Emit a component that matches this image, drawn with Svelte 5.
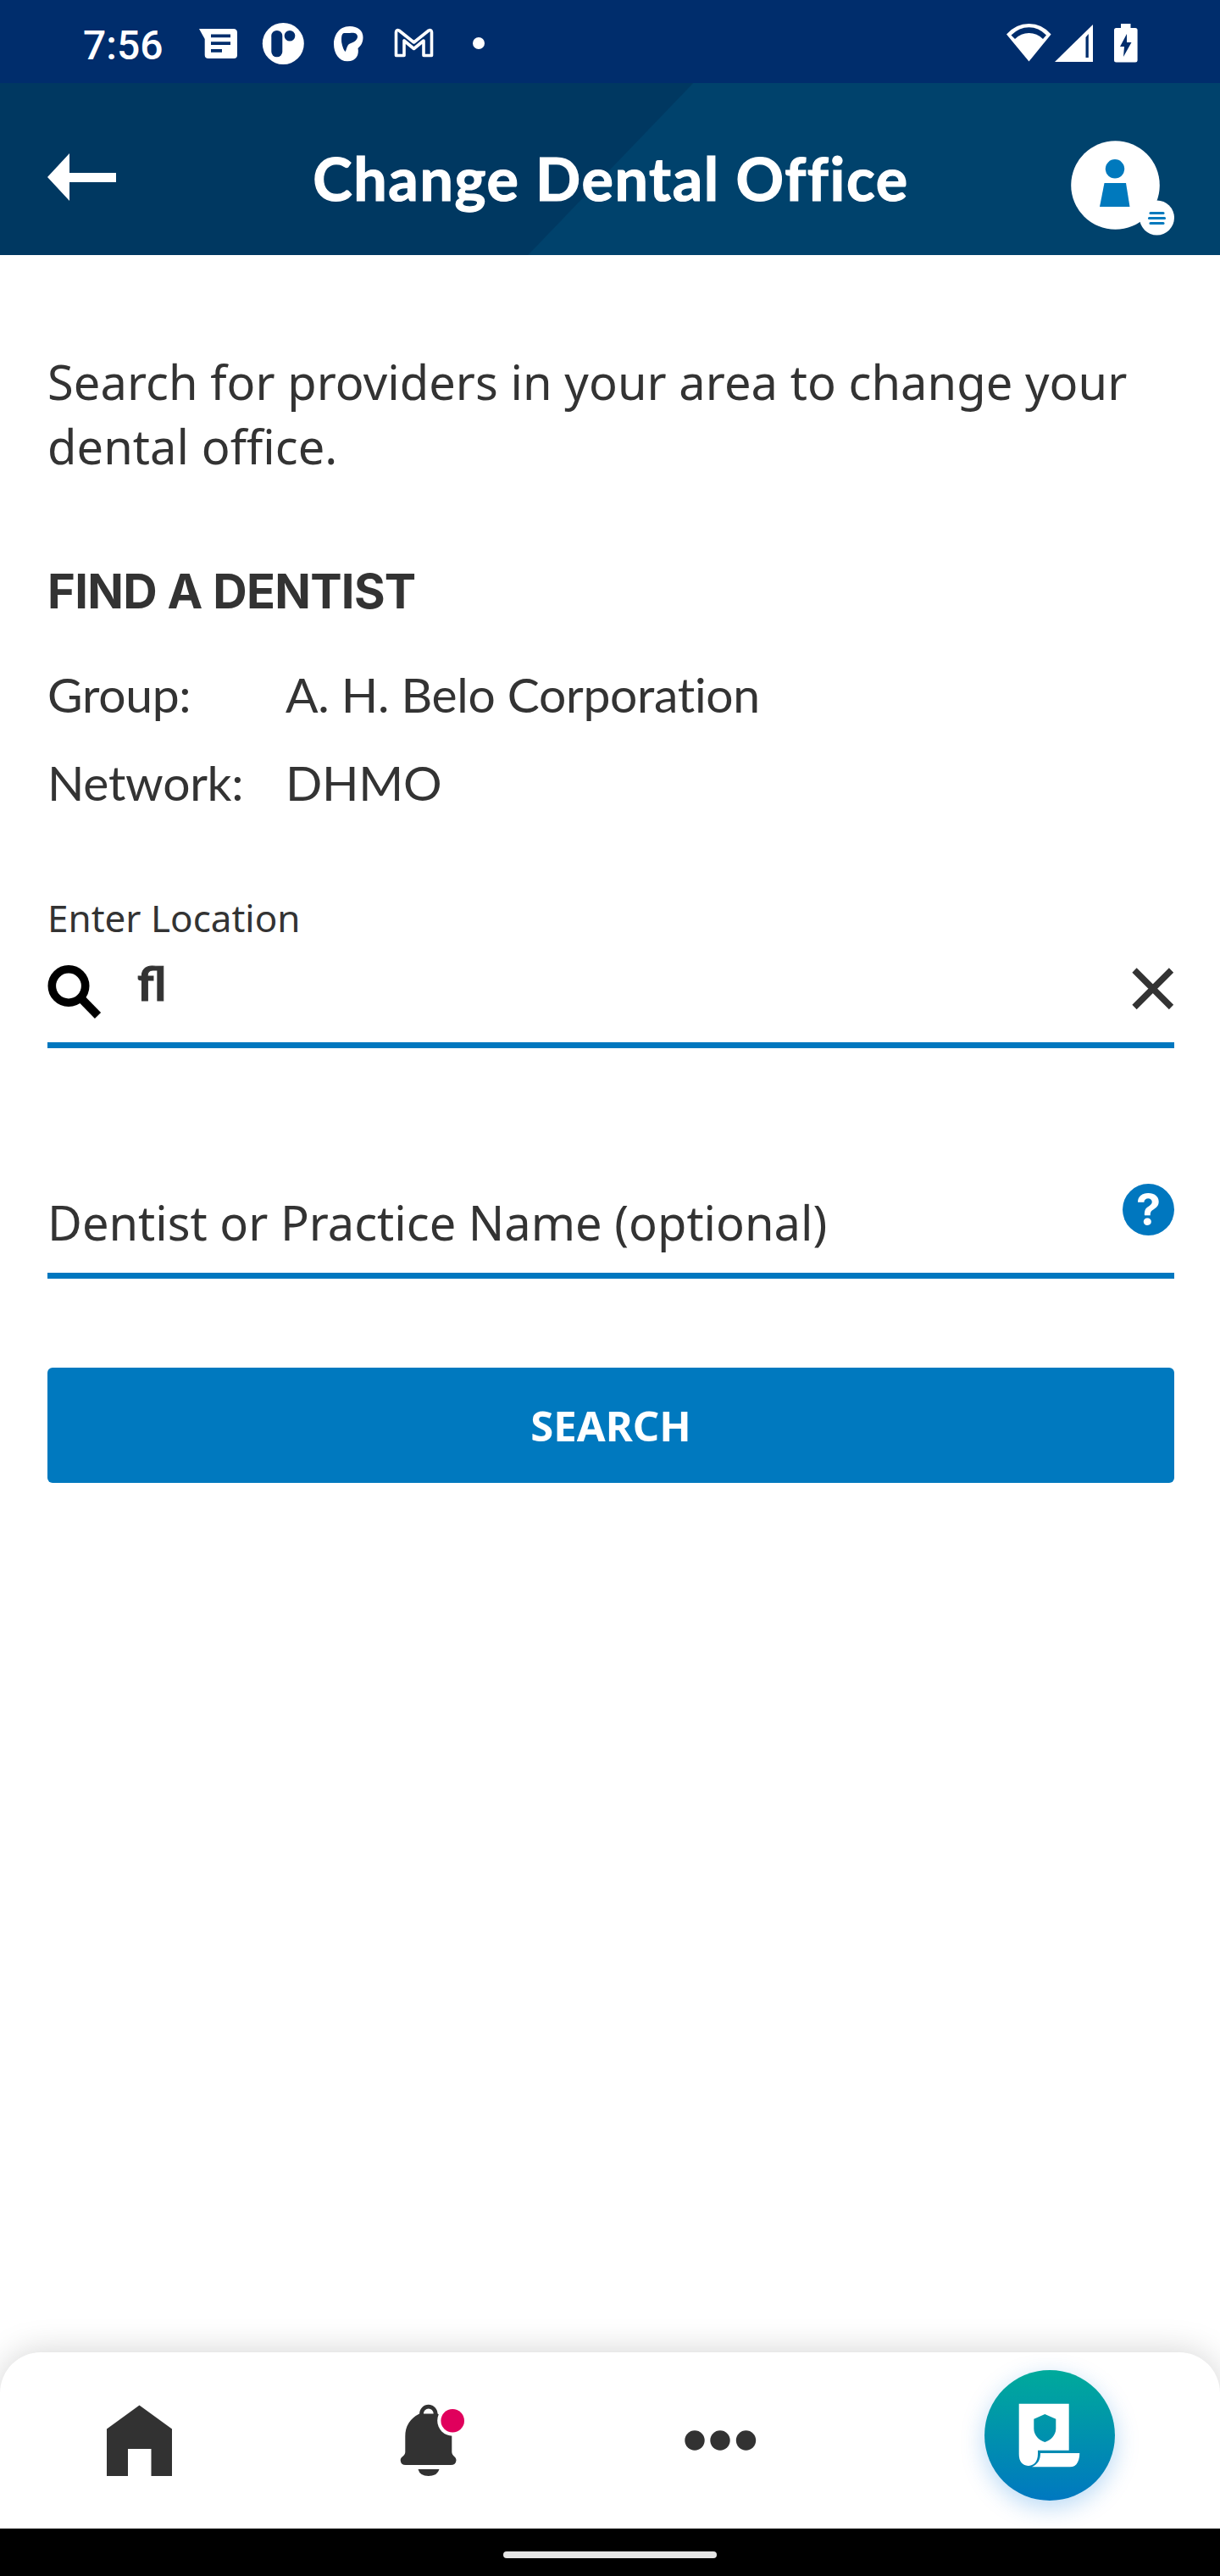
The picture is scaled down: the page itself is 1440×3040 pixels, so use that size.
<script>
  const details = [
    { term: 'Group:', value: 'A. H. Belo Corporation' },
    { term: 'Network:', value: 'DHMO' },
  ];
</script>

<div class="screen">
  <div class="status">
    <span class="clock">7:56</span>
    <div class="notifications">
      <svg width="72" height="98" viewBox="228 0 72 98">
        <path fill="#fff" d="M235 34H275.500Q280 34 280 38.500V65Q280 69 276 69H246Q241.700 69 241.700 65V46Z" />
        <path fill="#002d6c" d="M249 40.500h23v3.700h-23zM249 49.200h23v3.700h-23zM249 58h13v3.700h-13z" />
      </svg>
      <svg width="75" height="98" viewBox="300 0 75 98">
        <circle cx="334.300" cy="51.500" r="24.500" fill="#fff" />
        <rect x="320.300" y="36" width="13" height="31.300" rx="6.300" fill="#002d6c" />
        <circle cx="342" cy="42.300" r="6.300" fill="#002d6c" />
      </svg>
      <svg width="75" height="98" viewBox="375 0 75 98">
        <path fill="#fff" fill-rule="evenodd" d="M413 31C422 31 428.500 36 428.500 44C428.500 50 426 54 422.500 57C424 64 421 72.300 410 72.300C400 72.300 394 63 394 52C394 43 399 31 413 31ZM406 39C402.500 40 403 46 403.200 50C404 54 405.500 59 407.500 61C409 60 409 53 413 51.500C418 50 422 47 422 43C421.500 38 416 38.500 413 39Z" />
      </svg>
      <svg width="75" height="98" viewBox="450 0 75 98">
        <path fill="none" stroke="#fff" stroke-width="3.600" stroke-linejoin="round" d="M467.500 65.500V38Q468 34.500 471 36L488.500 50L506 36Q509 34.500 509.500 38V65.500H500V48L488.500 57.500L477 48V65.500Z" />
      </svg>
      <svg width="60" height="98" viewBox="525 0 60 98"><circle cx="565" cy="51" r="7" fill="#fff" /></svg>
    </div>
    <div class="system">
      <svg width="60" height="98" viewBox="1182 0 60 98">
        <path fill="#fff" d="M1188 40.500Q1199 28 1214.500 28T1240.600 40.500L1214.500 72.500Z" />
        <path fill="#002d6c" d="M1193.500 41.500Q1203 32.300 1214.500 32.300T1235 41.500L1231 46Q1224 39 1214.500 39T1198 46Z" />
      </svg>
      <svg width="63" height="98" viewBox="1242 0 63 98">
        <path fill="#fff" d="M1245 73L1290 29V73Z" />
        <path fill="#002d6c" d="M1281.500 44L1284.800 40V68H1281.500Z" />
      </svg>
      <svg width="45" height="98" viewBox="1305 0 45 98">
        <path fill="#fff" d="M1323 28H1334.500V33H1340Q1342.600 33 1342.600 35.500V71Q1342.600 73.500 1340 73.500H1317.500Q1315 73.500 1315 71V35.500Q1315 33 1317.500 33H1323Z" />
        <path fill="#002d6c" d="M1330 40L1322 55H1327L1326 67L1335.500 50H1330Z" />
      </svg>
    </div>
  </div>

  <header>
    <svg class="back" width="82" height="58" viewBox="56 180 82 58">
      <path fill="#fff" d="M56 209L82 181V204H137V215H82V237Z" />
    </svg>
    <h1>Change Dental Office</h1>
    <svg class="avatar" width="122" height="114" viewBox="1264 165 122 114">
      <circle cx="1316.500" cy="218.500" r="52.300" fill="#fff" />
      <circle cx="1316" cy="199.300" r="11.200" fill="#0079bd" />
      <path fill="#0079bd" d="M1303.500 216H1329L1333.500 244H1298Z" />
      <circle cx="1365.500" cy="257" r="20.500" fill="#fff" />
      <path stroke="#0079bd" stroke-width="3.200" stroke-linecap="round" d="M1358 251.500H1373M1356.500 257.500H1374.500M1358 263.500H1373" />
    </svg>
  </header>

  <main>
    <p class="intro">Search for providers in your area to change your dental office.</p>
    <h2>FIND A DENTIST</h2>
    <dl>
      {#each details as row}
        <div class="row">
          <dt>{row.term}</dt>
          <dd>{row.value}</dd>
        </div>
      {/each}
    </dl>

    <div class="label">Enter Location</div>
    <div class="field location">
      <svg class="loupe" width="64" height="64" viewBox="56 1139 64 64">
        <circle cx="81" cy="1163.500" r="19.700" fill="none" stroke="#000" stroke-width="9.600" />
        <path stroke="#000" stroke-width="10" d="M94.500 1177L115.500 1198.500" />
      </svg>
      <span class="typed">fl</span>
      <svg class="clear" width="50" height="50" viewBox="0 0 50 50">
        <path stroke="#333" stroke-width="7.500" d="M3 3L46.500 46.500M46.500 3L3 46.500" />
      </svg>
    </div>

    <div class="field practice">
      <span class="placeholder">Dentist or Practice Name (optional)</span>
      <span class="help">?</span>
    </div>

    <button>SEARCH</button>
  </main>

  <nav>
    <svg width="330" height="208" viewBox="0 2776 330 208">
      <path fill="#323232" d="M164.500 2838.500L203 2866.500V2922H178.500V2890H151V2922H126V2866.500Z" />
    </svg>
    <svg width="350" height="208" viewBox="330 2776 350 208">
      <path fill="none" stroke="#323232" stroke-width="4.800" d="M497.500 2851V2848.500A8.300 8.300 0 0 1 514.100 2848.500V2851" />
      <path fill="#323232" d="M495 2848.500H516.500Q533.300 2857 533.300 2875V2894C534 2899 538.500 2899 538.500 2903.500Q538 2909 532 2909H479Q473 2909 472.700 2903.500C472.700 2899 477.700 2899 478.300 2894V2875Q478.300 2857 495 2848.500ZM493.500 2914H518.500Q516 2922 505.800 2922T493.500 2914Z" />
      <circle cx="534.200" cy="2856.700" r="18" fill="#fff" />
      <circle cx="534.200" cy="2856.700" r="13.800" fill="#e0005c" />
    </svg>
    <svg width="340" height="208" viewBox="680 2776 340 208">
      <circle cx="820" cy="2880" r="11.700" fill="#323232" />
      <circle cx="850" cy="2880" r="11.700" fill="#323232" />
      <circle cx="880.500" cy="2880" r="11.700" fill="#323232" />
    </svg>
    <div class="fab">
      <svg width="154" height="154" viewBox="1162 2797 154 154">
        <path fill="#fff" fill-rule="evenodd" d="M1202.700 2836.700H1261.700V2891.700H1225V2896C1225 2905 1220 2910 1213.500 2910Q1202.700 2909 1202.700 2896ZM1233.300 2849L1246.300 2854.700V2866C1246.300 2874 1240 2880 1233.300 2882C1226.500 2880 1220.300 2874 1220.300 2866V2854.700Z" />
        <path fill="#fff" d="M1228 2895H1274.300C1274.300 2904 1271 2911.300 1263 2911.300H1218C1225 2908 1228 2903 1228 2895Z" />
      </svg>
    </div>
  </nav>
  <div class="gesture"><span></span></div>
</div>

<style>
  :global(body) { margin: 0; }
  .screen {
    width: 1440px;
    height: 3040px;
    display: flex;
    flex-direction: column;
    background: #fff;
    color: #333;
    overflow: hidden;
    font-family: "Noto Sans", sans-serif;
  }
  svg { display: block; flex: none; }
  .status {
    height: 98px;
    flex: none;
    display: flex;
    background: #002d6c;
  }
  .clock {
    box-sizing: border-box;
    width: 228px;
    padding-left: 98px;
    color: #fff;
    font: 500 48px/107px Roboto, sans-serif;
  }
  .notifications, .system { display: flex; }
  .system { margin-left: auto; margin-right: 90px; }
  header {
    box-sizing: border-box;
    height: 203px;
    flex: none;
    display: flex;
    align-items: flex-start;
    justify-content: space-between;
    padding: 0 54px 0 56px;
    background: linear-gradient(133.850deg, #003861 0 50%, #00426c 50.100%);
  }
  .back { margin-top: 82px; }
  .avatar { margin-top: 67px; }
  h1 {
    margin: 72px 0 0 40px;
    color: #fff;
    font: 700 70px/80px Lato, sans-serif;
    letter-spacing: 1.600px;
    white-space: nowrap;
    -webkit-text-stroke: 1.200px #fff;
  }
  main {
    flex: 1;
    padding: 111px 54px 0 56px;
  }
  .intro {
    margin: 0;
    font-size: 56px;
    line-height: 76px;
    letter-spacing: 0.060px;
  }
  h2 {
    margin: 96px 0 0;
    font: 700 56px/76px Inter, sans-serif;
    letter-spacing: -0.700px;
  }
  dl { margin: 31px 0 0; }
  .row {
    display: flex;
    font: 400 57px/104px Lato, sans-serif;
    letter-spacing: -0.300px;
  }
  dt { width: 281px; }
  dd { margin: 0; }
  .label {
    margin-top: 78px;
    font-size: 44px;
    line-height: 60px;
  }
  .field {
    box-sizing: border-box;
    display: flex;
    align-items: flex-start;
    border-bottom: 7px solid #0077bf;
  }
  .location { height: 124px; }
  .loupe { margin-top: 26px; }
  .typed {
    flex: 1;
    margin: 9px 0 0 42px;
    font: 700 56px/76px Lato, sans-serif;
    -webkit-text-stroke: 1px #333;
  }
  .clear { margin-top: 29px; }
  .practice {
    height: 112px;
    margin-top: 160px;
  }
  .placeholder {
    flex: 1;
    margin-top: 7px;
    font-size: 56px;
    line-height: 76px;
  }
  .help {
    width: 61px;
    height: 61px;
    border-radius: 50%;
    background: #0077bf;
    color: #fff;
    text-align: center;
    font: 700 52px/61px Inter, sans-serif;
  }
  button {
    display: block;
    width: 100%;
    height: 136px;
    margin-top: 105px;
    padding: 0;
    border: 0;
    border-radius: 6px;
    background: #0079bf;
    color: #fff;
    font: 700 49px/136px "Noto Sans", sans-serif;
  }
  nav {
    height: 208px;
    flex: none;
    display: flex;
    border-radius: 48px 48px 0 0;
    background: #fff;
    box-shadow: 0 0 40px rgba(0, 0, 0, 0.18);
  }
  .fab {
    width: 154px;
    height: 154px;
    margin: 21px 0 0 142px;
    border-radius: 50%;
    background: linear-gradient(#00aa9b, #0078c0);
    box-shadow: 0 8px 28px rgba(0, 120, 220, 0.28);
  }
  .gesture {
    position: relative;
    height: 56px;
    flex: none;
    display: flex;
    justify-content: center;
    background: #000;
  }
  .gesture span {
    width: 252px;
    height: 8px;
    margin-top: 27px;
    border-radius: 4px;
    background: #e6e6e6;
  }
</style>
